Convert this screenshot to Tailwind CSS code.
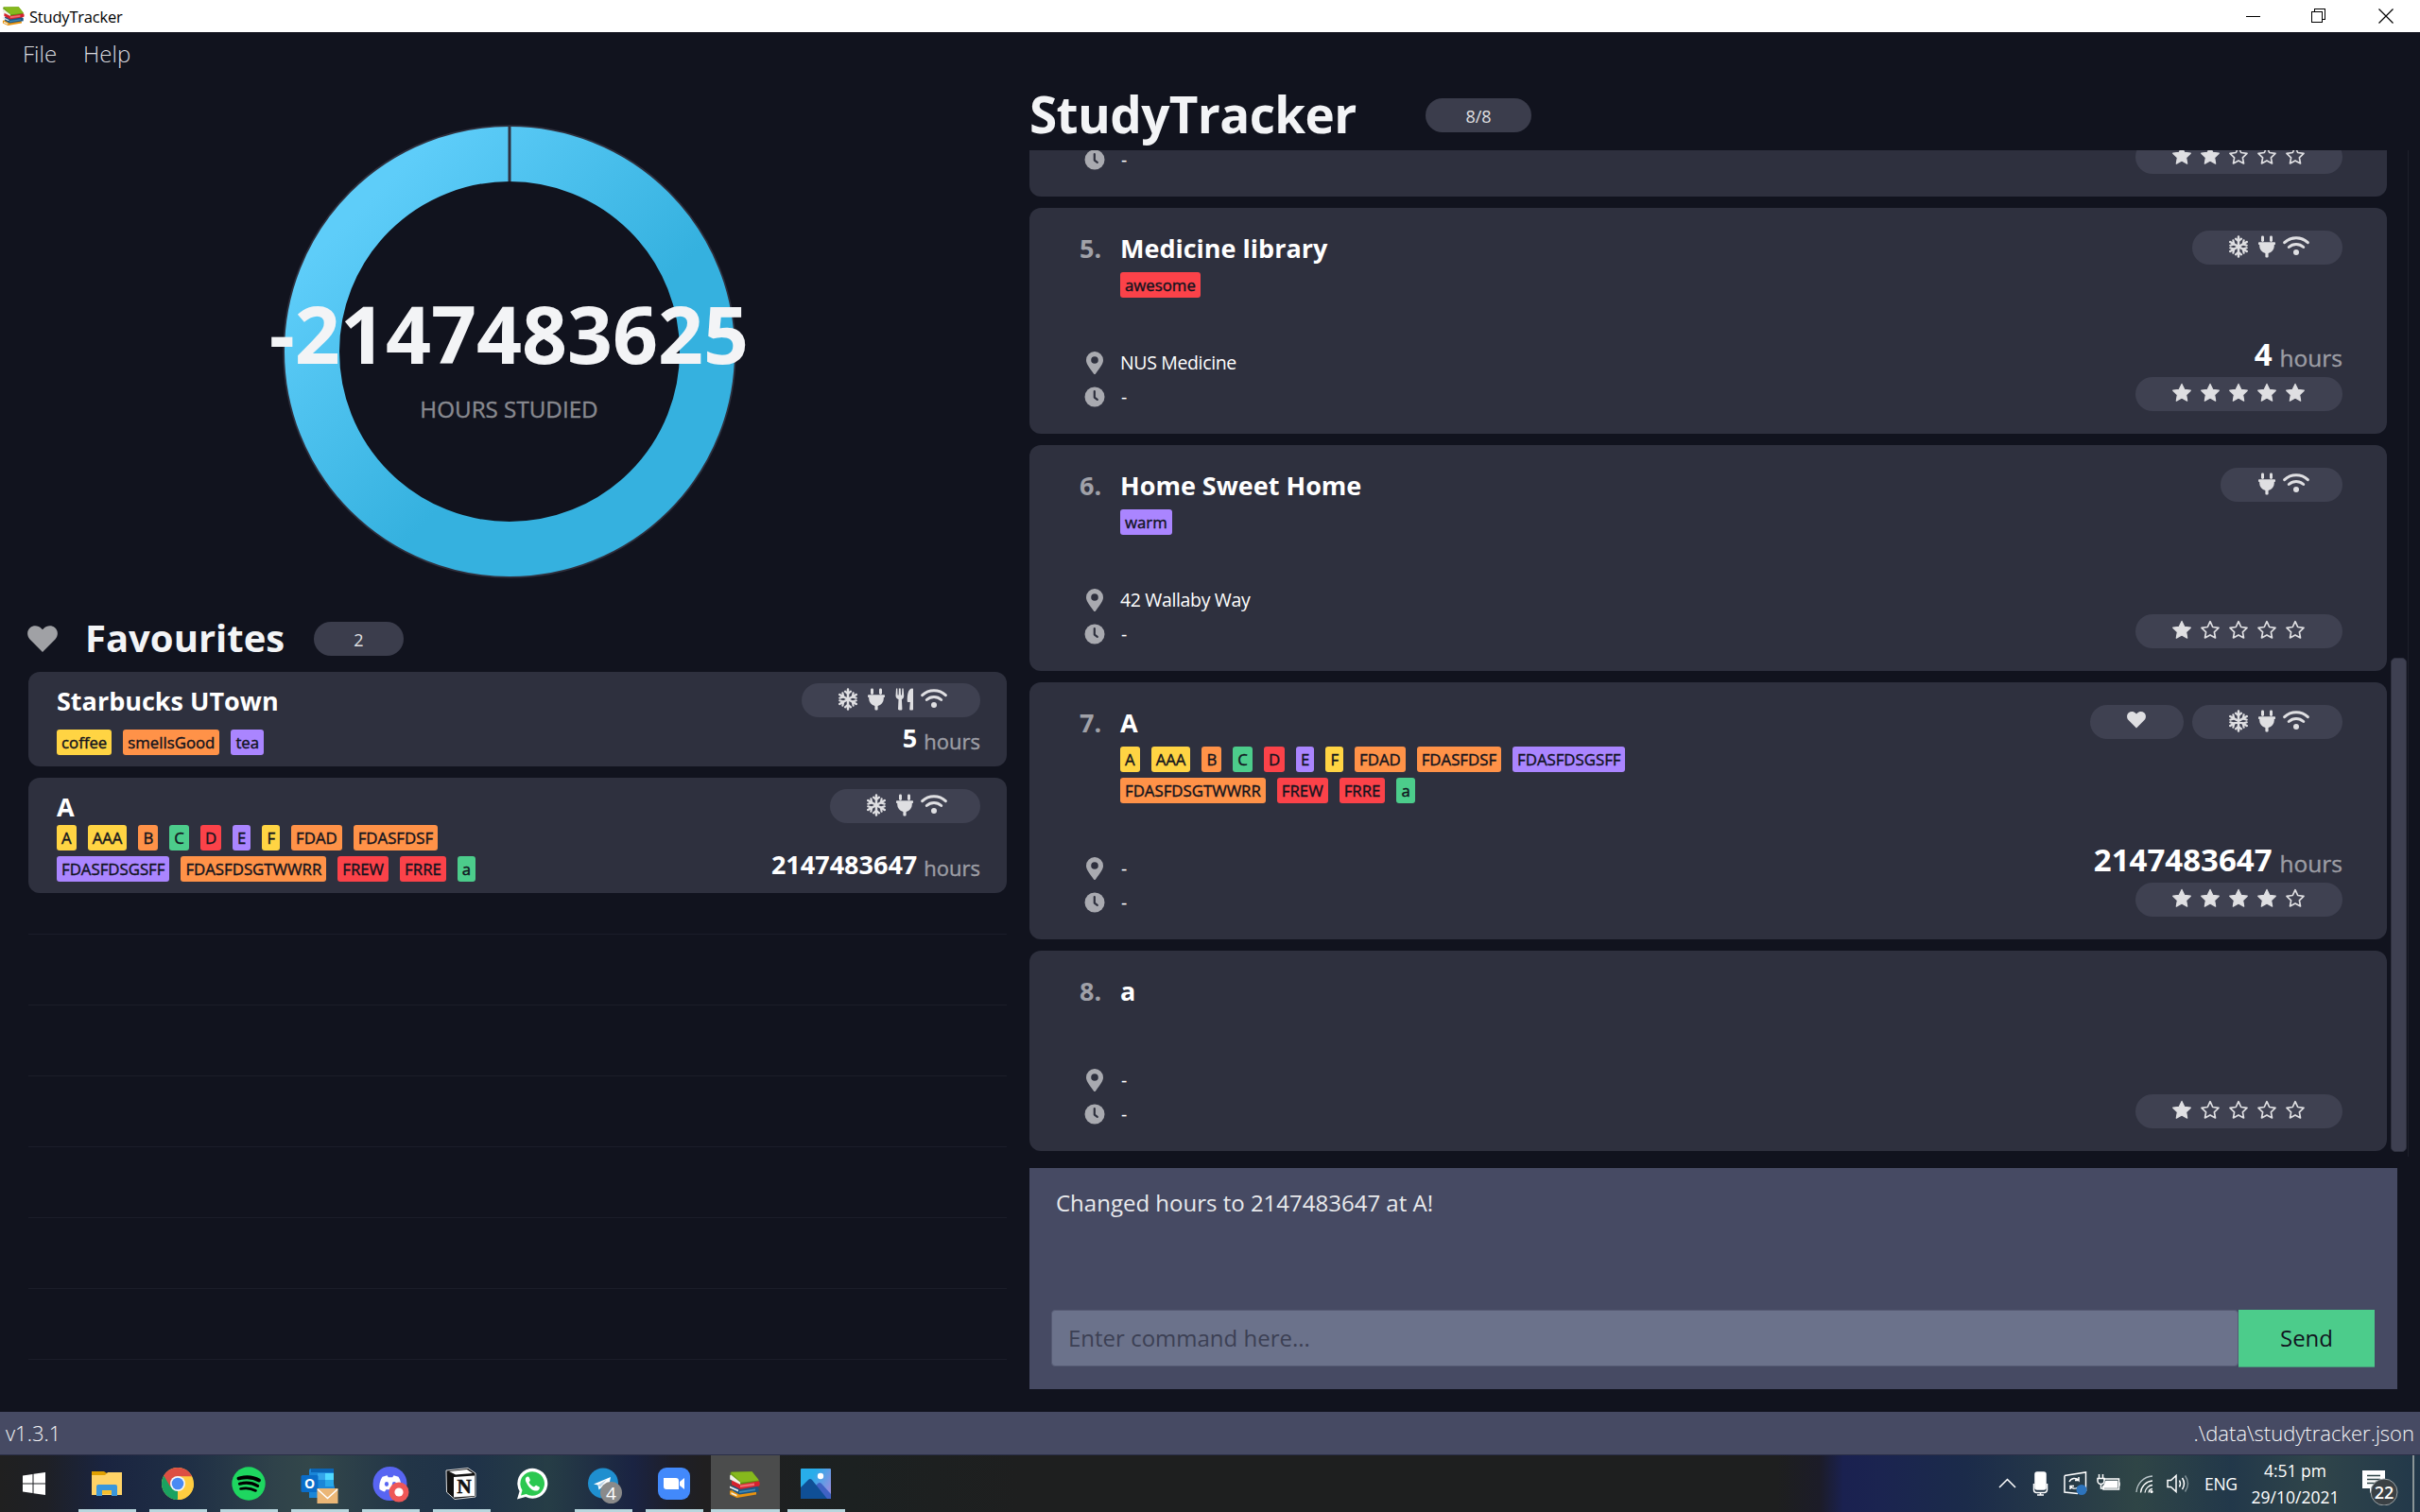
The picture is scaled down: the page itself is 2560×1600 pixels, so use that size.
<!DOCTYPE html>
<html lang="en">
<head>
<meta charset="utf-8">
<title>StudyTracker</title>
<script src="https://cdn.jsdelivr.net/npm/@tailwindcss/browser@4"></script>
</head>
<body class="w-[2560px] h-[1600px] overflow-hidden bg-[#11131e] text-white font-['Open_Sans',sans-serif] flex flex-col">

<svg class="hidden">
  <symbol id="snow" viewBox="0 0 20 24"><g fill="none" stroke="currentColor" stroke-width="2.5" stroke-linecap="round" stroke-linejoin="round"><path d="M10 1.5v21M1.2 7l17.6 10M18.8 7L1.2 17"/><path stroke-width="2.2" d="M7 3.6l3 2.6 3-2.6M7 20.400l3-2.600 3 2.600M1.300 10.700l3.900-1.300-.8-4M18.700 10.700l-3.900-1.300.8-4M1.300 13.300l3.900 1.300-.8 4M18.700 13.300l-3.900 1.300.8 4"/></g></symbol>
  <symbol id="plug" viewBox="0 0 20 24"><g fill="currentColor"><rect x="4" y="0.500" width="3" height="6.500" rx="1.400"/><rect x="13" y="0.500" width="3" height="6.500" rx="1.400"/><path d="M1.800 7.200h16.400a.8.8 0 0 1 .8.800v1.200a.8.8 0 0 1-.8.800h-.4v1.600a7.500 7.500 0 0 1-6.200 7.300v3.600a1 1 0 0 1-1 1h-1.200a1 1 0 0 1-1-1v-3.600a7.500 7.500 0 0 1-6.200-7.300V10h-.4a.8.8 0 0 1-.8-.8V8a.8.8 0 0 1 .8-.8z"/></g></symbol>
  <symbol id="wifi" viewBox="0 0 28 20"><g fill="none" stroke="currentColor" stroke-width="3" stroke-linecap="round"><path d="M1.700 6.700a18 18 0 0 1 24.600 0"/><path d="M6.300 11.500a11.500 11.500 0 0 1 15.400 0"/></g><circle cx="14" cy="17" r="3" fill="currentColor"/></symbol>
  <symbol id="food" viewBox="0 0 20 24"><g fill="currentColor"><path d="M1 .5h1.300l.3 7h1l.3-7h1.800l.3 7h1l.3-7h1.300l.6 7.700c0 2-.8 3.200-2.300 3.900l.5 10.200c0 .8-.6 1.200-1.300 1.200H4.300c-.8 0-1.300-.5-1.300-1.200l.5-10.200C1.900 11.400.5 10.200.5 8.200z"/><path d="M19 1.500v21c0 .7-.5 1-1.100 1h-1.500c-.7 0-1.200-.4-1.200-1.100l.6-7.400h-2.200c-.5 0-.8-.3-.8-.8C12.600 7 13.700.5 18 .5c.6 0 1 .4 1 1z"/></g></symbol>
  <symbol id="heart" viewBox="0 0 20 18"><path fill="currentColor" d="M10 17.500L1.600 9C-.6 6.600-.3 3 1.800 1.300 4-.5 7.300-.2 9.200 1.800l.8.800.8-.8c1.900-2 5.200-2.300 7.400-.5C20.300 3 20.600 6.600 18.400 9z"/></symbol>
  <symbol id="star" viewBox="0 0 22 21"><path fill="currentColor" stroke="currentColor" stroke-width="1.200" stroke-linejoin="round" d="M11 1.400l2.800 5.900 6.500.9-4.700 4.500 1.100 6.400L11 16l-5.700 3.100 1.100-6.400L1.700 8.200l6.500-.9z"/></symbol>
  <symbol id="staro" viewBox="0 0 22 21"><path fill="none" stroke="currentColor" stroke-width="1.700" stroke-linejoin="round" d="M11 1.700l2.700 5.800 6.300.9-4.600 4.400 1.100 6.100L11 15.900l-5.500 3 1.100-6.100L2 8.400l6.300-.9z"/></symbol>
  <symbol id="pin" viewBox="0 0 18 24"><path fill="currentColor" fill-rule="evenodd" d="M9 0a9 9 0 0 1 9 9c0 4-2.400 6.800-8 14.500a1.200 1.200 0 0 1-2 0C2.400 15.800 0 13 0 9a9 9 0 0 1 9-9zm0 5.200a3.800 3.800 0 1 0 0 7.600 3.800 3.800 0 0 0 0-7.600z"/></symbol>
  <symbol id="clock" viewBox="0 0 22 22"><circle cx="11" cy="11" r="10.500" fill="currentColor"/><path d="M10.800 5v6.600l3 2.200" fill="none" stroke="#2e303e" stroke-width="2.200" stroke-linecap="round" stroke-linejoin="round"/></symbol>
  <symbol id="books" viewBox="0 0 33 28">
    <path d="M1 20.500L22 18l7 4v2.500L8.500 28 1 24.500z" fill="#e8930f"/><path d="M2.500 22l6 2.800v1.700l-6-2.500z" fill="#f3efe2"/>
    <path d="M4 15.500L25 13l6.500 4v4.500L11 24.500l-7-4z" fill="#1d5580"/><path d="M11 21l17-2.500v1.800L11 23z" fill="#3d87b5"/>
    <path d="M1 15.500l9 4v2l-9-4z" fill="#e4ebef"/>
    <path d="M3 10l22-2 7 2.500q1.500 2.500 0 5L12 19l-9-5z" fill="#d5222e"/><path d="M12 14.500l15-2v2.500l-15 2z" fill="#f06a6f"/>
    <path d="M2 .8L24.500.3 32 10.300 12 13.800 2 8z" fill="#5e9112"/><path d="M2.500.8L24.500.3 32 9.500 11 12 3 3z" fill="#86b91d"/>
    <path d="M1.200 4.500l1.300-1.700L12 11l.2 3L1.200 8.500z" fill="#f0f2e8"/><path d="M2 .8l10 9.700v1L1.500 3z" fill="#6fa016"/>
  </symbol>
</svg>

<!-- window title bar -->
<header class="h-[34px] shrink-0 bg-white text-black flex items-center">
  <svg class="w-[24px] h-[20px] ml-[2px]"><use href="#books"/></svg>
  <span class="ml-[5px] mt-[2px] text-[16.5px] leading-[32px] tracking-[-0.2px]">StudyTracker</span>
  <svg class="ml-auto mr-[28px] w-[156px] h-[16px]" viewBox="0 0 156 16" fill="none" stroke="#000" stroke-width="1" shape-rendering="crispEdges"><path d="M0 8.500h15M69.500 3.500h11v11h-11zM72.500 3.500v-3h11v11h-3"/><path shape-rendering="auto" stroke-width="1.200" d="M140.500.5l15 15M155.500.5l-15 15"/></svg>
</header>

<!-- menu bar -->
<nav class="h-[47px] shrink-0 flex items-center pb-[2px] pl-[24px] gap-[28px] text-[24px] font-light text-[#dcdde0]">
  <span>File</span><span>Help</span>
</nav>

<main class="h-[1413px] shrink-0 flex">
  <section class="w-[1035px] ml-[30px] shrink-0 flex flex-col">
    <div class="relative h-[560px] flex justify-center pt-[50.5px] pr-[18px]">
      <svg class="w-[480px] h-[480px]" viewBox="0 0 480 480">
        <defs><linearGradient id="ring" x1="0.13" y1="0.13" x2="0.61" y2="0.61"><stop offset="0" stop-color="#5ecdf9"/><stop offset="1" stop-color="#35b1df"/></linearGradient></defs>
        <circle cx="240" cy="240" r="238.500" fill="none" stroke="#2e303e" stroke-width="2.500"/>
        <circle cx="240" cy="240" r="209" fill="none" stroke="url(#ring)" stroke-width="58"/>
        <path d="M240 1v59" stroke="#2e303e" stroke-width="3"/>
      </svg>
      <div class="absolute top-[214px] left-0 right-[18px] flex flex-col items-center">
        <div class="text-[84px] leading-[115px] font-bold text-[#f3f4f6]">-2147483625</div>
        <div class="mt-[6px] text-[24.2px] leading-[33px] [-webkit-text-stroke:0.4px] text-[#88898f]">HOURS STUDIED</div>
      </div>
    </div>
    <div class="h-[70px] flex items-center">
      <svg class="w-[32px] h-[29px] -ml-[1px] text-[#a0a1a5]"><use href="#heart"/></svg>
      <h2 class="ml-[29px] w-[212px] text-[40px] leading-[54px] pb-[3px] font-bold text-[#f3f4f6]">Favourites</h2>
      <span class="ml-[30px] w-[95px] h-[36px] rounded-full bg-[#3b3d4c] flex items-center justify-center text-[18px] pt-[2px] text-[#e0e0e2]">2</span>
    </div>
    <div class="flex flex-col gap-[12px]" id="favs"></div>
    <div class="mt-[43px] flex flex-col gap-[74px]">
      <div class="h-px bg-[#1b1d29]"></div><div class="h-px bg-[#1b1d29]"></div><div class="h-px bg-[#1b1d29]"></div><div class="h-px bg-[#1b1d29]"></div><div class="h-px bg-[#1b1d29]"></div><div class="h-px bg-[#1b1d29]"></div><div class="h-px bg-[#1b1d29]"></div>
    </div>
  </section>

  <section class="ml-[24px] w-[1459px] flex flex-col">
    <div class="h-[78px] flex items-center">
      <h1 class="w-[346px] mt-[2px] text-[53px] tracking-[-0.6px] leading-[74px] font-bold text-[#f3f4f6] whitespace-nowrap">StudyTracker</h1>
      <span class="ml-[73px] mt-[4px] w-[112px] h-[36px] rounded-full bg-[#3b3d4c] flex items-center justify-center text-[18px] pt-[2px] text-[#e0e0e2]">8/8</span>
    </div>
    <div class="h-[1065px] flex">
      <div class="w-[1436px] h-full flex flex-col justify-end gap-[12px] pb-[6px] overflow-hidden" id="spots"></div>
      <div class="ml-[4px] w-[19px] border-r border-[#1d1f2b] flex flex-col justify-end pb-[5px]"><div class="w-[17px] h-[523px] rounded-[5px] bg-[#3e4051] border border-[#2e303e]"></div></div>
    </div>
    <div class="mt-[12px] w-[1447px] h-[234px] bg-[#464a63] pl-[23px] pr-[24px] flex flex-col">
      <p class="h-[150px] pl-[5px] pt-[20px] text-[24px] leading-[33px] text-[#e8e9ec]">Changed hours to 2147483647 at A!</p>
      <div class="flex h-[62px]">
        <div class="w-[1256px] h-[60px] rounded-[4px] bg-[#6b728b] border border-[#555a73] flex items-center pl-[17px] text-[24px] text-[#3c4054]">Enter command here...</div>
        <button class="w-[144px] h-[61px] bg-[#4ccc8b] border-b border-[#49977c] text-[#11131e] text-[24px] text-center">Send</button>
      </div>
    </div>
  </section>
</main>

<footer class="h-[46px] shrink-0 bg-[#464a63] border-b border-[#2b2f48] flex items-center justify-between pl-[6px] pr-[6px] text-[22px] font-light text-[#f4f5f7]">
  <span>v1.3.1</span><span>.\data\studytracker.json</span>
</footer>

<!-- taskbar -->
<div class="h-[60px] shrink-0 flex bg-[linear-gradient(90deg,#202020_0,#1e2026_50px,#1a2440_110px,#1f2f45_200px,#2f424a_290px,#33474a_330px,#223547_430px,#1f3248_500px,#263d46_580px,#1a2342_670px,#1e1f2a_710px,#201f20_745px,#1c2121_900px,#1e1f1f_1080px,#1e1f1f_1880px,#1c1c28_1925px,#1a2150_1950px,#1b2450_1990px,#1b2b4a_2080px,#2f4546_2260px,#22384a_2360px,#30454a_2450px,#22384a_2560px)]">
  <div class="w-[76px] flex items-center"><svg class="ml-[24px] w-[24px] h-[24px]" viewBox="0 0 24 24" fill="#fff"><path d="M0 3.400L10.500 2v9.500H0zM11.500 1.800L24 0v11.500H11.500zM0 12.500h10.500V22L0 20.600zM11.500 12.500H24V24l-12.500-1.800z"/></svg></div>
  <div class="flex [&_svg]:mr-[2px]">
    <div class="w-[75px] flex flex-col items-center justify-end"><svg class="w-[36px] h-[36px] mb-[9px]" viewBox="0 0 36 36"><path d="M2 5h13l3 2v4H2z" fill="#e0a000"/><path d="M2 9h14l3-3h15v24H2z" fill="#ffd367"/><path d="M7 31V21a2 2 0 0 1 2-2h18a2 2 0 0 1 2 2v10h-6v-6H13v6z" fill="#3a97dc"/><path d="M13 25h10v4H13z" fill="#f7bf2e"/></svg><i class="w-[61px] h-[3px] bg-[#b8d6dd]"></i></div>
    <div class="w-[75px] flex flex-col items-center justify-end"><svg class="w-[36px] h-[36px] mb-[9px]" viewBox="-18 -18 36 36"><circle r="17" fill="#ffcd40"/><path d="M0 0L-14.700-8.500A17 17 0 0 0 0 17z" fill="#1aa260"/><path d="M0 0l8 0L-.5 17H3A17 17 0 0 0 17 0z" fill="#ffcd40"/><path d="M-14.700-8.500A17 17 0 0 1 15.200-7.800H0L-8 3z" fill="#dd4f43"/><circle r="8" fill="#f4f7fb"/><circle r="6.300" fill="#4a8af4"/></svg><i class="w-[61px] h-[3px] bg-[#b8d6dd]"></i></div>
    <div class="w-[75px] flex flex-col items-center justify-end"><svg class="w-[36px] h-[36px] mb-[9px]" viewBox="-18 -18 36 36"><circle r="17.700" fill="#1ed760"/><g fill="none" stroke="#000" stroke-linecap="round"><path stroke-width="3.800" d="M-10.500-5.500C-3-7.500 5-7 11-3.500"/><path stroke-width="3.200" d="M-9.500.2C-3-1.500 4-.8 9.500 2.400"/><path stroke-width="2.600" d="M-8.500 5.500C-3 4.200 2.500 4.800 7.500 7.500"/></g></svg><i class="w-[61px] h-[3px] bg-[#b8d6dd]"></i></div>
    <div class="w-[75px] flex flex-col items-center justify-end"><svg class="w-[40px] h-[40px] mb-[5px]" viewBox="0 0 40 40"><path d="M11 2h24v16l1 4v11H9V4a2 2 0 0 1 2-2z" fill="#1a86d8"/><path d="M11 2h24v4H11z" fill="#0b64b4"/><path d="M18 7h8v7h-8z" fill="#34a5ea"/><path d="M26 7h9v7h-9z" fill="#50d9ff"/><path d="M26 14h9v7h-9z" fill="#28a8ea"/><rect x="0.500" y="9" width="18" height="18" rx="1.500" fill="#0a6dc9"/><text x="9.500" y="23" text-anchor="middle" font-family="Open Sans" font-weight="700" font-size="14" fill="#fff">O</text><path d="M17.500 23h22v16h-22z" fill="#ebb676"/><path d="M18 24l10.500 9.500L39 24" fill="none" stroke="#fff" stroke-width="1.500"/></svg><i class="w-[61px] h-[3px] bg-[#b8d6dd]"></i></div>
    <div class="w-[75px] flex flex-col items-center justify-end"><svg class="w-[40px] h-[40px] mb-[7px]" viewBox="-20 -20 40 40"><circle cx="-.5" r="18" fill="#5865f2"/><path d="M-8.500-7.200L-3.500-8.700l1.300 2h4.400l1.300-2 5 1.500C11-3.500 12 2 11 6c-2 1.700-3.500 2.400-5 2.600L4.500 6.200h-9L-6 8.600c-1.500-.2-3-1-5.500-2.600C-12.300 1.500-11-3.500-8.500-7.200z" fill="#fff"/><ellipse cx="-4" cy="0.500" rx="2.100" ry="2.400" fill="#5865f2"/><ellipse cx="4" cy="0.500" rx="2.100" ry="2.400" fill="#5865f2"/><circle cx="9" cy="9" r="10.500" fill="#ee5757"/><circle cx="9" cy="9" r="4.600" fill="#fff"/></svg><i class="w-[61px] h-[3px] bg-[#b8d6dd]"></i></div>
    <div class="w-[75px] flex flex-col items-center justify-end"><svg class="w-[36px] h-[36px] mb-[9px]" viewBox="0 0 36 36"><path d="M2 4l23-2.500 8 5.500v25l-22 2.500L2.500 27z" fill="#111" stroke="#ddd" stroke-width="1"/><path d="M5 5l19-2 6 4-18 1.500z" fill="#fff"/><path d="M10 11l22-1.500v21.500L10 32.500z" fill="#fff"/><text x="21" y="28" text-anchor="middle" font-family="Liberation Serif" font-weight="700" font-size="21" fill="#111" stroke="#111" stroke-width=".6">N</text></svg><i class="w-[61px] h-[3px] bg-[#b8d6dd]"></i></div>
    <div class="w-[75px] flex flex-col items-center justify-end"><svg class="w-[36px] h-[36px] mb-[12px]" viewBox="-18 -18 36 36"><path d="M-16 16.500l2.600-8.500A16 16 0 1 1-7 14z" fill="#fff"/><path d="M-12 12.500l1.500-5.500A12.800 12.800 0 1 1-6.300 11z" fill="#2bc850"/><path d="M-6.500-6.500c1.200-1.500 2.800-1.200 3.300 0l1 2.600c.3 1-.8 1.800-1.300 2.500C-2.300 1-.5 2.600 2 3.600c.8-.5 1.500-2 2.500-1.700L7.500 3.400c.8.500.2 2.400-.8 3.300-1.200 1-3.200 1.200-5 .5C-3 5.500-6-.5-6.800-2.500c-.5-1.500-.5-3 .3-4z" fill="#fff"/></svg></div>
    <div class="w-[75px] flex flex-col items-center justify-end"><svg class="w-[40px] h-[40px] mb-[5px]" viewBox="0 0 40 40"><circle cx="20" cy="17.500" r="16" fill="#1f8fcf"/><path d="M10 18.500L28 11l-3 15-6-4.500-3.500 3-1-5z" fill="#fff"/><path d="M14.500 19.500L24 13.500l-7 8z" fill="#b8d4e8"/><circle cx="28.500" cy="27.500" r="11.500" fill="#8a8a8a"/><text x="28.500" y="34.500" text-anchor="middle" font-family="Open Sans" font-size="19" fill="#fff">4</text></svg><i class="w-[61px] h-[3px] bg-[#b8d6dd]"></i></div>
    <div class="w-[75px] flex flex-col items-center justify-end"><svg class="w-[36px] h-[36px] mb-[9px]" viewBox="0 0 36 36"><rect x="1" y="1" width="34" height="34" rx="9" fill="#4289fb"/><path d="M7 12h13a3 3 0 0 1 3 3v9H10a3 3 0 0 1-3-3zM24 16l5-4v12l-5-4z" fill="#fff"/></svg><i class="w-[61px] h-[3px] bg-[#b8d6dd]"></i></div>
    <div class="w-[73px] mx-[1px] bg-[#4b4c4c] flex flex-col items-center justify-end"><svg class="w-[33px] h-[28px] mb-[12px]"><use href="#books"/></svg><i class="w-[73px] h-[3px] bg-[#b8d6dd]"></i></div>
    <div class="w-[75px] flex flex-col items-center justify-end"><svg class="w-[32px] h-[32px] mb-[11px]" viewBox="0 0 32 32"><defs><linearGradient id="sky" x1="0" x2="1" y1="0" y2="0.600"><stop offset=".4" stop-color="#28adea"/><stop offset="1" stop-color="#8f8fe0"/></linearGradient></defs><rect width="32" height="32" rx="1" fill="url(#sky)"/><path d="M14 20l4-4q2-2 4 0l10 11v5H14z" fill="#3f62c4"/><path d="M0 20l8-8q2-2 4 0l16 20H0z" fill="#0f4f96"/><circle cx="21" cy="8" r="3.200" fill="#fff"/></svg><i class="w-[61px] h-[3px] bg-[#b8d6dd]"></i></div>
  </div>
  <div class="ml-auto flex items-center h-[60px]">
    <svg class="w-[203px] h-[28px]" viewBox="0 0 203 28" fill="none" stroke="#fff" stroke-width="1.500"><path d="M1 18l8.500-8.500L18 18"/><rect x="39" y="2" width="11" height="18" rx="2" fill="#fff"/><path d="M37.500 14v6.500a3 3 0 0 0 3 3h8a3 3 0 0 0 3-3V14M44.500 23v3M41 26h7"/><path d="M70 5.500L92.500 2v20M70 5.500V23l14 1.500M75 12a6 6 0 0 1 10-1.500V7M85.500 10.500H81M76 20v-3.500h4M76 17a6 6 0 0 0 8 1"/><circle cx="88" cy="20.500" r="5.500" fill="#2d74bd" stroke="none"/><path d="M111 9h16.500v11H111v-4M128 12.500v4"/><path d="M114 11.500h11.500v6.500H111z" fill="#fff" stroke="#fff"/><path d="M106.500 4v4M110.500 4v4M105 8.500h7v2.500a3.500 3.500 0 0 1-7 0zM108.500 14v5h3"/><g stroke-width="1.300"><path d="M146 23A18 18 0 0 1 163 6" stroke="#b9c4c8"/><path d="M150.500 23.500A13.500 13.500 0 0 1 163 11"/><path d="M155 23.500a9 9 0 0 1 8-8"/><path d="M159 23.500a4.500 4.500 0 0 1 4-4"/></g><circle cx="162" cy="22.500" r="1.600" fill="#fff" stroke="none"/><path d="M179 10.500h3.500L188 5.500v17l-5.500-5H179z"/><path d="M191.500 10.500q2 3.500 0 7M194.500 8q4 6 0 12"/><path stroke="#7f9096" d="M197.500 5.500q6 8.500 0 17"/></svg>
    <span class="ml-[15px] w-[36px] text-[17.500px] tracking-[-0.3px]">ENG</span>
    <div class="ml-[13px] w-[94px] text-center text-[17.500px] leading-[28px] whitespace-nowrap flex flex-col items-center"><span>4:51 pm</span><span>29/10/2021</span></div>
    <svg class="ml-[23px] w-[40px] h-[38px] mt-[8px]" viewBox="0 0 40 38"><path d="M1 1h24v19H14l-5 5v-5H1z" fill="#fff"/><path d="M6 6.500h14M6 10.500h14M6 14.500h9" stroke="#2f4548" stroke-width="1.300"/><circle cx="24" cy="24" r="14" fill="#3a4044" stroke="#9ba3a6"/><text x="24" y="31" text-anchor="middle" font-family="Open Sans" font-weight="600" font-size="18" fill="#fff">22</text></svg>
    <div class="ml-[14px] mr-[6px] w-[2px] h-[60px] bg-[#8a9597]"></div>
  </div>
</div>

<script>
const COLORS = { y: 'bg-[#ffd443]', o: 'bg-[#ff9248]', g: 'bg-[#4ccc8b]', r: 'bg-[#fb4249]', p: 'bg-[#aa85ff]' };
const tag = ([c, t]) => `<span class="h-[27px] px-[5px] rounded-[3px] text-[16.8px] leading-[28px] [-webkit-text-stroke:0.4px] text-[#11131e] ${COLORS[c]}">${t}</span>`;
const row = ts => `<div class="flex gap-[12px]">${ts.map(tag).join('')}</div>`;
const icon = { snow: '<svg class="w-[20px] h-[24px]"><use href="#snow"/></svg>', plug: '<svg class="w-[20px] h-[24px]"><use href="#plug"/></svg>', food: '<svg class="w-[20px] h-[24px]"><use href="#food"/></svg>', wifi: '<svg class="w-[28px] h-[20px] -ml-[3px] mt-[1px]"><use href="#wifi"/></svg>', heart: '<svg class="w-[20px] h-[18px]"><use href="#heart"/></svg>' };
const pill = names => `<div class="h-[36px] rounded-full bg-[#3f4151] text-[#dfdfe2] flex items-start gap-[10px] pl-[39px] ${names[0] === 'heart' ? 'pr-[40px] pt-[7px]' : 'pr-[35px] pt-[5px]'}">${names.map(n => icon[n]).join('')}</div>`;
const stars = n => `<div class="w-[219px] h-[36px] rounded-full bg-[#3f4151] text-[#dfdfe2] flex gap-[8px] pl-[38px] pt-[6px]">${[0,1,2,3,4].map(i => i < n ? '<svg class="w-[22px] h-[21px]"><use href="#star"/></svg>' : '<svg class="w-[22px] h-[21px]"><use href="#staro"/></svg>').join('')}</div>`;
const A1 = [['y','A'],['y','AAA'],['o','B'],['g','C'],['r','D'],['p','E'],['y','F'],['o','FDAD'],['o','FDASFDSF']];
const P = ['p','FDASFDSGSFF'], A2 = [['o','FDASFDSGTWWRR'],['r','FREW'],['r','FRRE'],['g','a']];

const fav = (h, name, rows, icons, hours) => `<article class="${h} rounded-[12px] bg-[#2e303e] flex justify-between pl-[30px] pr-[28px] py-[12px]">
  <div class="flex flex-col justify-between"><h3 class="text-[27px] leading-[37px] font-bold">${name}</h3><div class="flex flex-col gap-[6px]">${rows.map(row).join('')}</div></div>
  <div class="flex flex-col items-end justify-between">${pill(icons)}<div class="flex items-baseline gap-[7px] -mb-[2px] leading-[37px]"><b class="text-[27px] leading-[37px]">${hours}</b><span class="relative top-[2px] text-[22px] [-webkit-text-stroke:0.4px] text-[#9c9da4] leading-[37px]">hours</span></div></div></article>`;
document.getElementById('favs').innerHTML =
  fav('h-[100px]', 'Starbucks UTown', [[['y','coffee'],['o','smellsGood'],['p','tea']]], ['snow','plug','food','wifi'], '5') +
  fav('h-[122px]', 'A', [A1, [P, ...A2]], ['snow','plug','wifi'], '2147483647');

const spot = (h, i, name, rows, loc, pills, hours, n) => `<article class="${h} shrink-0 rounded-[12px] bg-[#2e303e] flex pl-[53px] pr-[47px] pt-[24px] pb-[24px]">
  <div class="flex flex-col justify-between">
    <div class="flex"><span class="w-[43px] text-[27px] leading-[37px] font-bold text-[#a0a1a8]">${i}</span>
      <div><h3 class="text-[27px] leading-[37px] font-bold">${name}</h3><div class="mt-[7px] flex flex-col gap-[6px]">${rows.map(row).join('')}</div></div></div>
    <div class="-mb-[3px] text-[19.5px] leading-[34px] tracking-[-0.35px]">
      <div class="h-[36px] flex items-center"><svg class="ml-[7px] mr-[18px] w-[18px] h-[24px] text-[#a9aab0]"><use href="#pin"/></svg>${loc === '-' ? '<span class="ml-[1px]">-</span>' : loc}</div>
      <div class="h-[36px] flex items-center"><svg class="ml-[5px] mr-[17px] w-[22px] h-[22px] text-[#a9aab0]"><use href="#clock"/></svg>-</div></div>
  </div>
  <div class="ml-auto flex flex-col items-end">
    <div class="flex gap-[9px]">${pills.map(pill).join('')}</div>
    <div class="mt-auto -mb-[1px] flex items-baseline gap-[8px] ${hours ? '' : 'hidden'}"><b class="text-[33px] leading-[45px]">${hours}</b><span class="relative top-[1px] text-[24.5px] leading-[45px] [-webkit-text-stroke:0.4px] text-[#9c9da4]">hours</span></div>
    <div class="${hours ? '' : 'mt-auto'}">${stars(n)}</div>
  </div></article>`;
document.getElementById('spots').innerHTML =
  spot('h-[239px]', '', '', [], '', [], '', 2) +
  spot('h-[239px]', '5.', 'Medicine library', [[['r','awesome']]], 'NUS Medicine', [['snow','plug','wifi']], '4', 5) +
  spot('h-[239px]', '6.', 'Home Sweet Home', [[['p','warm']]], '42 Wallaby Way', [['plug','wifi']], '', 1) +
  spot('h-[272px]', '7.', 'A', [[...A1, P], A2], '-', [['heart'], ['snow','plug','wifi']], '2147483647', 4) +
  spot('h-[212px]', '8.', 'a', [], '-', [], '', 1);
</script>
</body>
</html>
